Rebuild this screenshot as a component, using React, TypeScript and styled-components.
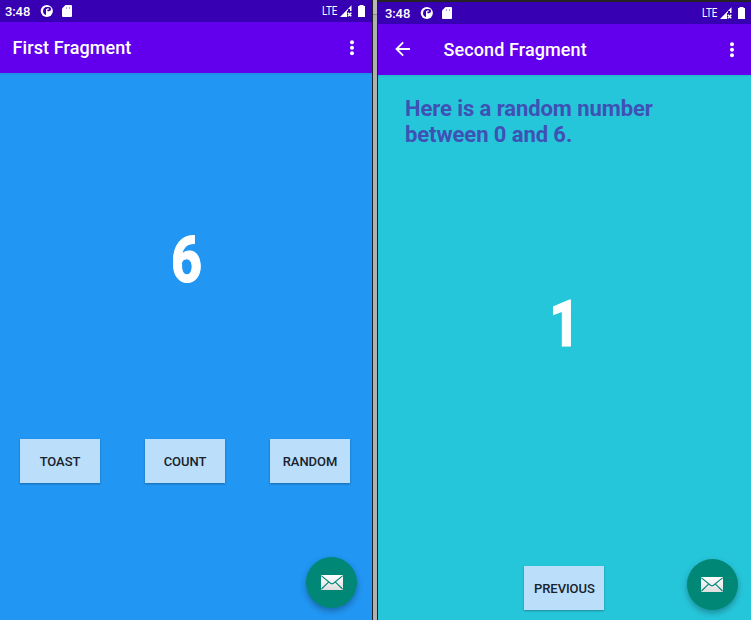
import React from "react";
import styled, { createGlobalStyle } from "styled-components";

const GlobalStyle = createGlobalStyle`
  * { box-sizing: border-box; }
  body { margin: 0; overflow: hidden; font-family: Roboto, sans-serif; }
`;

const Desktop = styled.main`
  display: flex;
  width: 751px;
  height: 620px;
  background: #252528;
`;

const Phone = styled.section<{ $color: string; $width: number; $top?: number }>`
  display: flex;
  flex-direction: column;
  flex: none;
  width: ${(p) => p.$width}px;
  height: 620px;
  padding-top: ${(p) => p.$top ?? 0}px;
  background: linear-gradient(#242225 ${(p) => p.$top ?? 0}px, ${(p) => p.$color} 0);
`;

const Divider = styled.div`
  flex: none;
  width: 6px;
  height: 620px;
  border: solid #1d2024;
  border-width: 0 1px;
  background: linear-gradient(#b8b8b8 14px, #858585 14px 15px, #b0b0b0 15px);
`;

const StatusBar = styled.div<{ $left: number; $right: number }>`
  display: flex;
  align-items: center;
  height: 22px;
  padding: 0 ${(p) => p.$right}px 0 ${(p) => p.$left}px;
  color: #fff;
  background: #3700b3;
  svg { display: block; flex: none; }
`;

const Clock = styled.span`
  width: 35px;
  padding-top: 1px;
  font-size: 13px;
  font-weight: 500;
  line-height: 22px;
  letter-spacing: -0.1px;
  white-space: nowrap;
`;

const Notifications = styled.div`
  display: flex;
  align-items: center;
  gap: 9px;
  flex: 1;
`;

const Network = styled.span`
  width: 18px;
  font-size: 12px;
  line-height: 22px;
  white-space: nowrap;
`;

const NetworkText = styled.span`
  display: inline-block;
  transform: scaleX(0.82);
  transform-origin: left;
`;

const Toolbar = styled.header<{ $back?: boolean }>`
  display: flex;
  align-items: center;
  height: 51px;
  padding-left: ${(p) => (p.$back ? 16 : 12.5)}px;
  padding-right: ${(p) => (p.$back ? 17 : 18)}px;
  color: #fff;
  background: #6200ee;
  box-shadow: 0 1px 2px rgba(0, 0, 0, 0.1);
  svg { display: block; }
`;

const Back = styled.div`
  width: 49.5px;
  padding-bottom: 1px;
`;

const Title = styled.h1`
  flex: 1;
  margin: 0;
  font-size: 18px;
  font-weight: 500;
  line-height: 24px;
  letter-spacing: 0.1px;
`;

const Content = styled.div`
  display: flex;
  flex-direction: column;
  flex: 1;
  align-items: center;
`;

const BigNumber = styled.div<{ $top: number }>`
  margin-top: ${(p) => p.$top}px;
  height: 80px;
  font-size: 64px;
  font-weight: 800;
  line-height: 80px;
  color: #fff;
  transform: scaleX(0.84);
  -webkit-text-stroke: 1px #fff;
`;

const Buttons = styled.div`
  display: flex;
  gap: 45px;
  width: 100%;
  margin-top: 138px;
  padding-left: 20px;
`;

const Button = styled.button`
  width: 80px;
  height: 44px;
  padding: 1px 0 0;
  border: 0;
  font: 500 13px/43px Roboto, sans-serif;
  letter-spacing: -0.05px;
  color: #17222c;
  background: #bbdefb;
  box-shadow: 0 1px 2px rgba(0, 0, 0, 0.3);
`;

const Caption = styled.p`
  align-self: flex-start;
  width: 270px;
  height: 52px;
  margin: 21px 0 0 27px;
  font-size: 22px;
  font-weight: 700;
  line-height: 26px;
  letter-spacing: -0.08px;
  color: #3f51b5;
`;

const Footer = styled.div`
  display: flex;
  align-items: flex-end;
  justify-content: space-between;
  width: 100%;
  margin-top: auto;
  padding: 0 13.5px 10px 146.4px;
`;

const Fab = styled.button<{ $bottom: number; $right: number }>`
  display: grid;
  place-items: center;
  flex: none;
  width: 51px;
  height: 51px;
  padding: 0;
  border: 0;
  border-radius: 50%;
  align-self: flex-end;
  margin: auto ${(p) => p.$right}px ${(p) => p.$bottom}px 0;
  background: #018776;
  box-shadow: 0 3px 6px rgba(0, 0, 0, 0.3);
`;

function StatusContents({ left, right }: { left: number; right: number }) {
  return (
    <StatusBar $left={left} $right={right}>
      <Clock>3:48</Clock>
      <Notifications>
        <svg width="13" height="12" viewBox="0 0 13 12">
          <ellipse cx="6.8" cy="6" rx="6.1" ry="6" fill="#fff" />
          <path d="M5.7 2H9q2.1 0 2.1 2.1T9 6.2H7.4V4H6v6Q3 9 3 6T5.7 2Z" fill="#3700b3" />
          <path d="M7.2 3.3h1.5v1.5H7.2z" fill="#fff" />
        </svg>
        <svg width="10" height="12" viewBox="0 0 10 12">
          <path d="M3.5 0H9q1 0 1 1v10q0 1-1 1H1q-1 0-1-1V3.5Z" fill="#fff" />
          <path d="M4.5 2v2M7.5 2v2" stroke="#9f87da" strokeWidth=".8" />
        </svg>
      </Notifications>
      <Network><NetworkText>LTE</NetworkText></Network>
      <svg width="12" height="12" viewBox="0 0 12 12">
        <path d="M0 12 11.5.2V6H7v6Z" fill="#fff" />
        <path d="M8 4h2v3H8Z" fill="#3700b3" />
        <path d="m7.8 7.8 3.5 3.5m0-3.5-3.5 3.5" stroke="#fff" strokeWidth="1.5" />
      </svg>
      <svg width="13" height="12" viewBox="0 0 13 12">
        <path d="M7.5 1V0h4v1H13v11H6V1Z" fill="#fff" />
      </svg>
    </StatusBar>
  );
}

function MoreIcon() {
  return (
    <svg width="4" height="16" viewBox="0 0 4 16" fill="#fff">
      <circle cx="2" cy="2.2" r="2" />
      <circle cx="2" cy="7.7" r="2" />
      <circle cx="2" cy="13.2" r="2" />
    </svg>
  );
}

function MailIcon({ id }: { id: string }) {
  return (
    <svg width="22" height="15" viewBox="0 0 22 15">
      <defs>
        <linearGradient id={id} x2="0" y2="1">
          <stop stopColor="#fff" />
          <stop offset="1" stopColor="#dedede" />
        </linearGradient>
      </defs>
      <rect width="22" height="15" rx="1" fill={`url(#${id})`} />
      <path d="m.5.8 9 7.4q1.5 1.1 3 0l9-7.4M.5 14l7.3-7.2M21.5 14l-7.3-7.2" fill="none" stroke="#018776" strokeWidth="1.1" />
    </svg>
  );
}

export default function App() {
  return (
    <>
      <GlobalStyle />
      <Desktop>
        <Phone $color="#2196f3" $width={372}>
          <StatusContents left={5} right={7} />
          <Toolbar><Title>First Fragment</Title><MoreIcon /></Toolbar>
          <Content>
            <BigNumber $top={148}>6</BigNumber>
            <Buttons>
              <Button>TOAST</Button><Button>COUNT</Button><Button>RANDOM</Button>
            </Buttons>
            <Fab $right={15} $bottom={12} aria-label="Email"><MailIcon id="mail-first" /></Fab>
          </Content>
        </Phone>
        <Divider />
        <Phone $color="#26c6da" $width={373} $top={2}>
          <StatusContents left={7} right={6} />
          <Toolbar $back>
            <Back>
              <svg width="18" height="16" viewBox="0 0 18 16" fill="none" stroke="#fff" strokeWidth="1.8">
                <path d="M9.2 1.3 2.5 8l6.7 6.7M2.5 8H16" />
              </svg>
            </Back>
            <Title>Second Fragment</Title><MoreIcon />
          </Toolbar>
          <Content>
            <Caption>Here is a random number between 0 and 6.</Caption>
            <BigNumber $top={137}>1</BigNumber>
            <Footer>
              <Button>PREVIOUS</Button>
              <Fab $right={0} $bottom={0} aria-label="Email"><MailIcon id="mail-second" /></Fab>
            </Footer>
          </Content>
        </Phone>
      </Desktop>
    </>
  );
}
